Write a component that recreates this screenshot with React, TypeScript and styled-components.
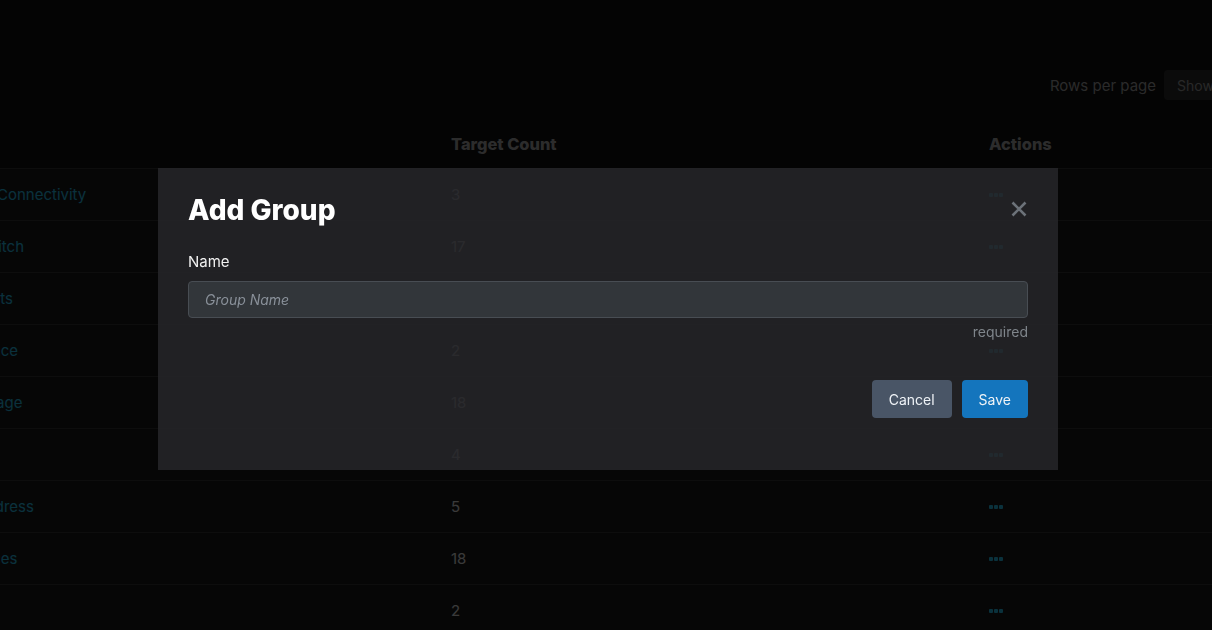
import styled, { createGlobalStyle } from "styled-components";

const GlobalStyle = createGlobalStyle`
  html, body {
    margin: 0;
    padding: 0;
    background: #101010;
    font-family: Inter, "Noto Sans", sans-serif;
  }
`;

const Page = styled.div`
  position: relative;
  height: 100vh;
  overflow: hidden;
  background: #101010;
`;

// the page is scrolled sideways a bit, so the name column is cut on the left
const Canvas = styled.div`
  width: 1500px;
  margin-left: -220px;
  padding-top: 70px;
`;

const Toolbar = styled.div`
  display: flex;
  justify-content: flex-end;
  align-items: center;
  gap: 8px;
  height: 30px;
  padding-right: 10px;
`;

const RowsLabel = styled.span`
  font-size: 15px;
  color: #a8a8a8;
`;

const SelectBox = styled.div`
  width: 106px;
  height: 30px;
  box-sizing: border-box;
  padding: 0 13px;
  display: flex;
  align-items: center;
  border-radius: 4px;
  background: #2e2e2e;
  color: #a0a0a0;
  font-size: 14px;
`;

const Table = styled.div`
  margin-top: 20px;
`;

const Grid = styled.div<{ $body?: boolean }>`
  display: grid;
  grid-template-columns: 671px 538px 1fr;
  align-items: center;
  height: ${(p) => (p.$body ? "52px" : "49px")};
  box-sizing: border-box;
  border-bottom: 1px solid #363636;
  background: ${(p) => (p.$body ? "#1b1b1b" : "transparent")};
`;

const HeadCell = styled.div<{ $pad?: number }>`
  padding-left: ${(p) => p.$pad ?? 0}px;
  font-size: 16.4px;
  font-weight: 800;
  color: #b0b0b0;
`;

const NameCell = styled.a`
  padding-left: 158px;
  font-size: 15px;
  color: #2ac2ee;
  text-decoration: none;
  white-space: nowrap;
`;

const CountCell = styled.div`
  font-size: 15px;
  color: #e6e6e6;
`;

const ActionCell = styled.div`
  display: flex;
  align-items: center;
`;

const Overlay = styled.div`
  position: fixed;
  inset: 0;
  background: rgba(0, 0, 0, 0.75);
  display: flex;
  justify-content: center;
  align-items: flex-start;
  padding: 168px 0 0 4px;
  box-sizing: border-box;
`;

const Modal = styled.div`
  width: 900px;
  box-sizing: border-box;
  padding: 25px 30px 52px;
  background: rgba(38, 39, 42, 0.83);
`;

const ModalHead = styled.div`
  display: flex;
  justify-content: space-between;
  align-items: center;
`;

const Title = styled.h2`
  margin: 0;
  font-size: 28px;
  line-height: 35px;
  font-weight: 800;
  color: #ffffff;
`;

const CloseButton = styled.button`
  width: 22px;
  height: 22px;
  padding: 0;
  margin-right: -2px;
  margin-top: -4px;
  border: none;
  background: none;
  display: flex;
  align-items: center;
  justify-content: center;
  cursor: pointer;
`;

const Label = styled.label`
  display: block;
  margin-top: 25px;
  font-size: 15px;
  line-height: 18px;
  color: #f0f0f0;
`;

const Input = styled.input`
  display: block;
  width: 100%;
  height: 37px;
  box-sizing: border-box;
  margin-top: 10px;
  padding: 0 16px;
  border: 1px solid #484d53;
  border-radius: 4px;
  background: #32363a;
  color: #f0f0f0;
  font-family: inherit;
  font-size: 14px;
  outline: none;

  &::placeholder {
    color: #899099;
    font-style: italic;
  }
`;

const Hint = styled.div`
  margin-top: 5px;
  text-align: right;
  font-size: 14px;
  line-height: 17px;
  color: #7f858b;
`;

const Footer = styled.div`
  display: flex;
  justify-content: flex-end;
  gap: 10px;
  margin-top: 40px;
`;

const Button = styled.button<{ $primary?: boolean }>`
  height: 38px;
  padding: 0 17px;
  border: none;
  border-radius: 4px;
  background: ${(p) => (p.$primary ? "#1475bd" : "#495566")};
  color: #eef2f6;
  font-family: inherit;
  font-size: 14px;
  cursor: pointer;
`;

const rows = [
  { name: "Internet Connectivity", count: 3 },
  { name: "Core Switch", count: 17 },
  { name: "Test Hosts", count: 6 },
  { name: "Workspace", count: 2 },
  { name: "File Storage", count: 18 },
  { name: "DNS", count: 4 },
  { name: "Host Address", count: 5 },
  { name: "IP Services", count: 18 },
  { name: "VPN", count: 2 },
];

function Dots() {
  return (
    <svg width="14" height="4" viewBox="0 0 14 4">
      <rect x="0" y="0" width="4" height="4" rx="1" fill="#2ac2ee" />
      <rect x="5" y="0" width="4" height="4" rx="1" fill="#2ac2ee" />
      <rect x="10" y="0" width="4" height="4" rx="1" fill="#2ac2ee" />
    </svg>
  );
}

export default function App() {
  return (
    <Page>
      <GlobalStyle />
      <Canvas>
        <Toolbar>
          <RowsLabel>Rows per page</RowsLabel>
          <SelectBox>Show 10</SelectBox>
        </Toolbar>
        <Table>
          <Grid>
            <HeadCell $pad={158} />
            <HeadCell>Target Count</HeadCell>
            <HeadCell>Actions</HeadCell>
          </Grid>
          {rows.map((r) => (
            <Grid $body key={r.name}>
              <NameCell href="#">{r.name}</NameCell>
              <CountCell>{r.count}</CountCell>
              <ActionCell>
                <Dots />
              </ActionCell>
            </Grid>
          ))}
        </Table>
      </Canvas>

      <Overlay>
        <Modal>
          <ModalHead>
            <Title>Add Group</Title>
            <CloseButton aria-label="Close">
              <svg width="16" height="16" viewBox="0 0 16 16">
                <path
                  d="M1.5 1.5 14.5 14.5M14.5 1.5 1.5 14.5"
                  stroke="#6c7279"
                  strokeWidth="2.6"
                  fill="none"
                />
              </svg>
            </CloseButton>
          </ModalHead>
          <Label htmlFor="group-name">Name</Label>
          <Input id="group-name" placeholder="Group Name" />
          <Hint>required</Hint>
          <Footer>
            <Button>Cancel</Button>
            <Button $primary>Save</Button>
          </Footer>
        </Modal>
      </Overlay>
    </Page>
  );
}
